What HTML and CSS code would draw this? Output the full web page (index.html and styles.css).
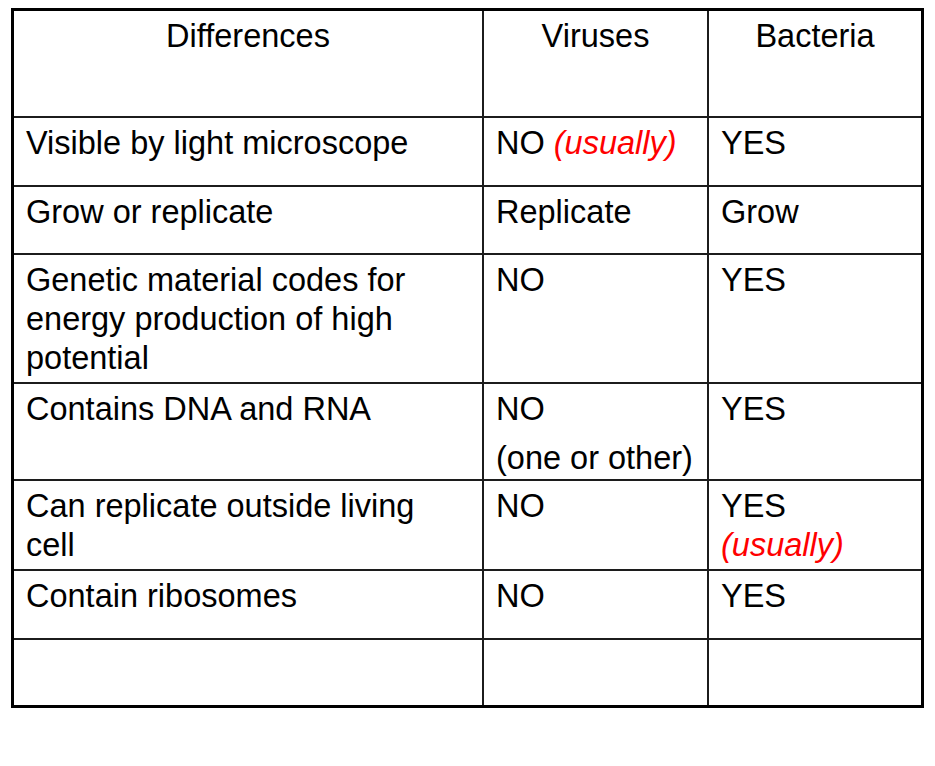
FILE: index.html
```html
<!DOCTYPE html>
<html>
<head>
<meta charset="utf-8">
<link rel="stylesheet" href="styles.css">
</head>
<body>
<div class="table">
  <div class="cell head">Differences</div>
  <div class="cell head">Viruses</div>
  <div class="cell head">Bacteria</div>

  <div class="cell label">Visible by light microscope</div>
  <div class="cell">NO <span class="note">(usually)</span></div>
  <div class="cell">YES</div>

  <div class="cell label">Grow or replicate</div>
  <div class="cell">Replicate</div>
  <div class="cell">Grow</div>

  <div class="cell label">Genetic material codes for energy production of high potential</div>
  <div class="cell">NO</div>
  <div class="cell">YES</div>

  <div class="cell label">Contains DNA and RNA</div>
  <div class="cell"><p>NO</p><p class="second">(one or other)</p></div>
  <div class="cell">YES</div>

  <div class="cell label">Can replicate outside living cell</div>
  <div class="cell">NO</div>
  <div class="cell">YES<br><span class="note">(usually)</span></div>

  <div class="cell label">Contain ribosomes</div>
  <div class="cell">NO</div>
  <div class="cell">YES</div>

  <div class="cell label"></div>
  <div class="cell"></div>
  <div class="cell"></div>
</div>
</body>
</html>
```

FILE: styles.css
```css
html, body {
  margin: 0;
  padding: 0;
  background: #ffffff;
}

body {
  font-family: "Liberation Sans", Arial, sans-serif;
  color: #000000;
}

.table {
  margin: 8px 0 0 11px;
  width: 907px;
  border: 3px solid #000000;
  background: #1c1c1c;
  display: grid;
  grid-template-columns: 468px 223px 212px;
  grid-template-rows: 105px 67px 66px 127px 95px 88px 67px 65px;
  column-gap: 2px;
  row-gap: 2px;
}

.cell {
  background: #ffffff;
  padding: 6px 2px 0 12px;
  font-size: 32.5px;
  line-height: 39px;
  overflow: hidden;
}

.cell.label {
  padding-right: 24px;
}

.cell p {
  margin: 0;
  white-space: nowrap;
}

.cell .second {
  margin-top: 10px;
}

.head {
  text-align: center;
  padding-left: 0;
  padding-right: 0;
}

.note {
  color: #ff0000;
  font-style: italic;
}
```
